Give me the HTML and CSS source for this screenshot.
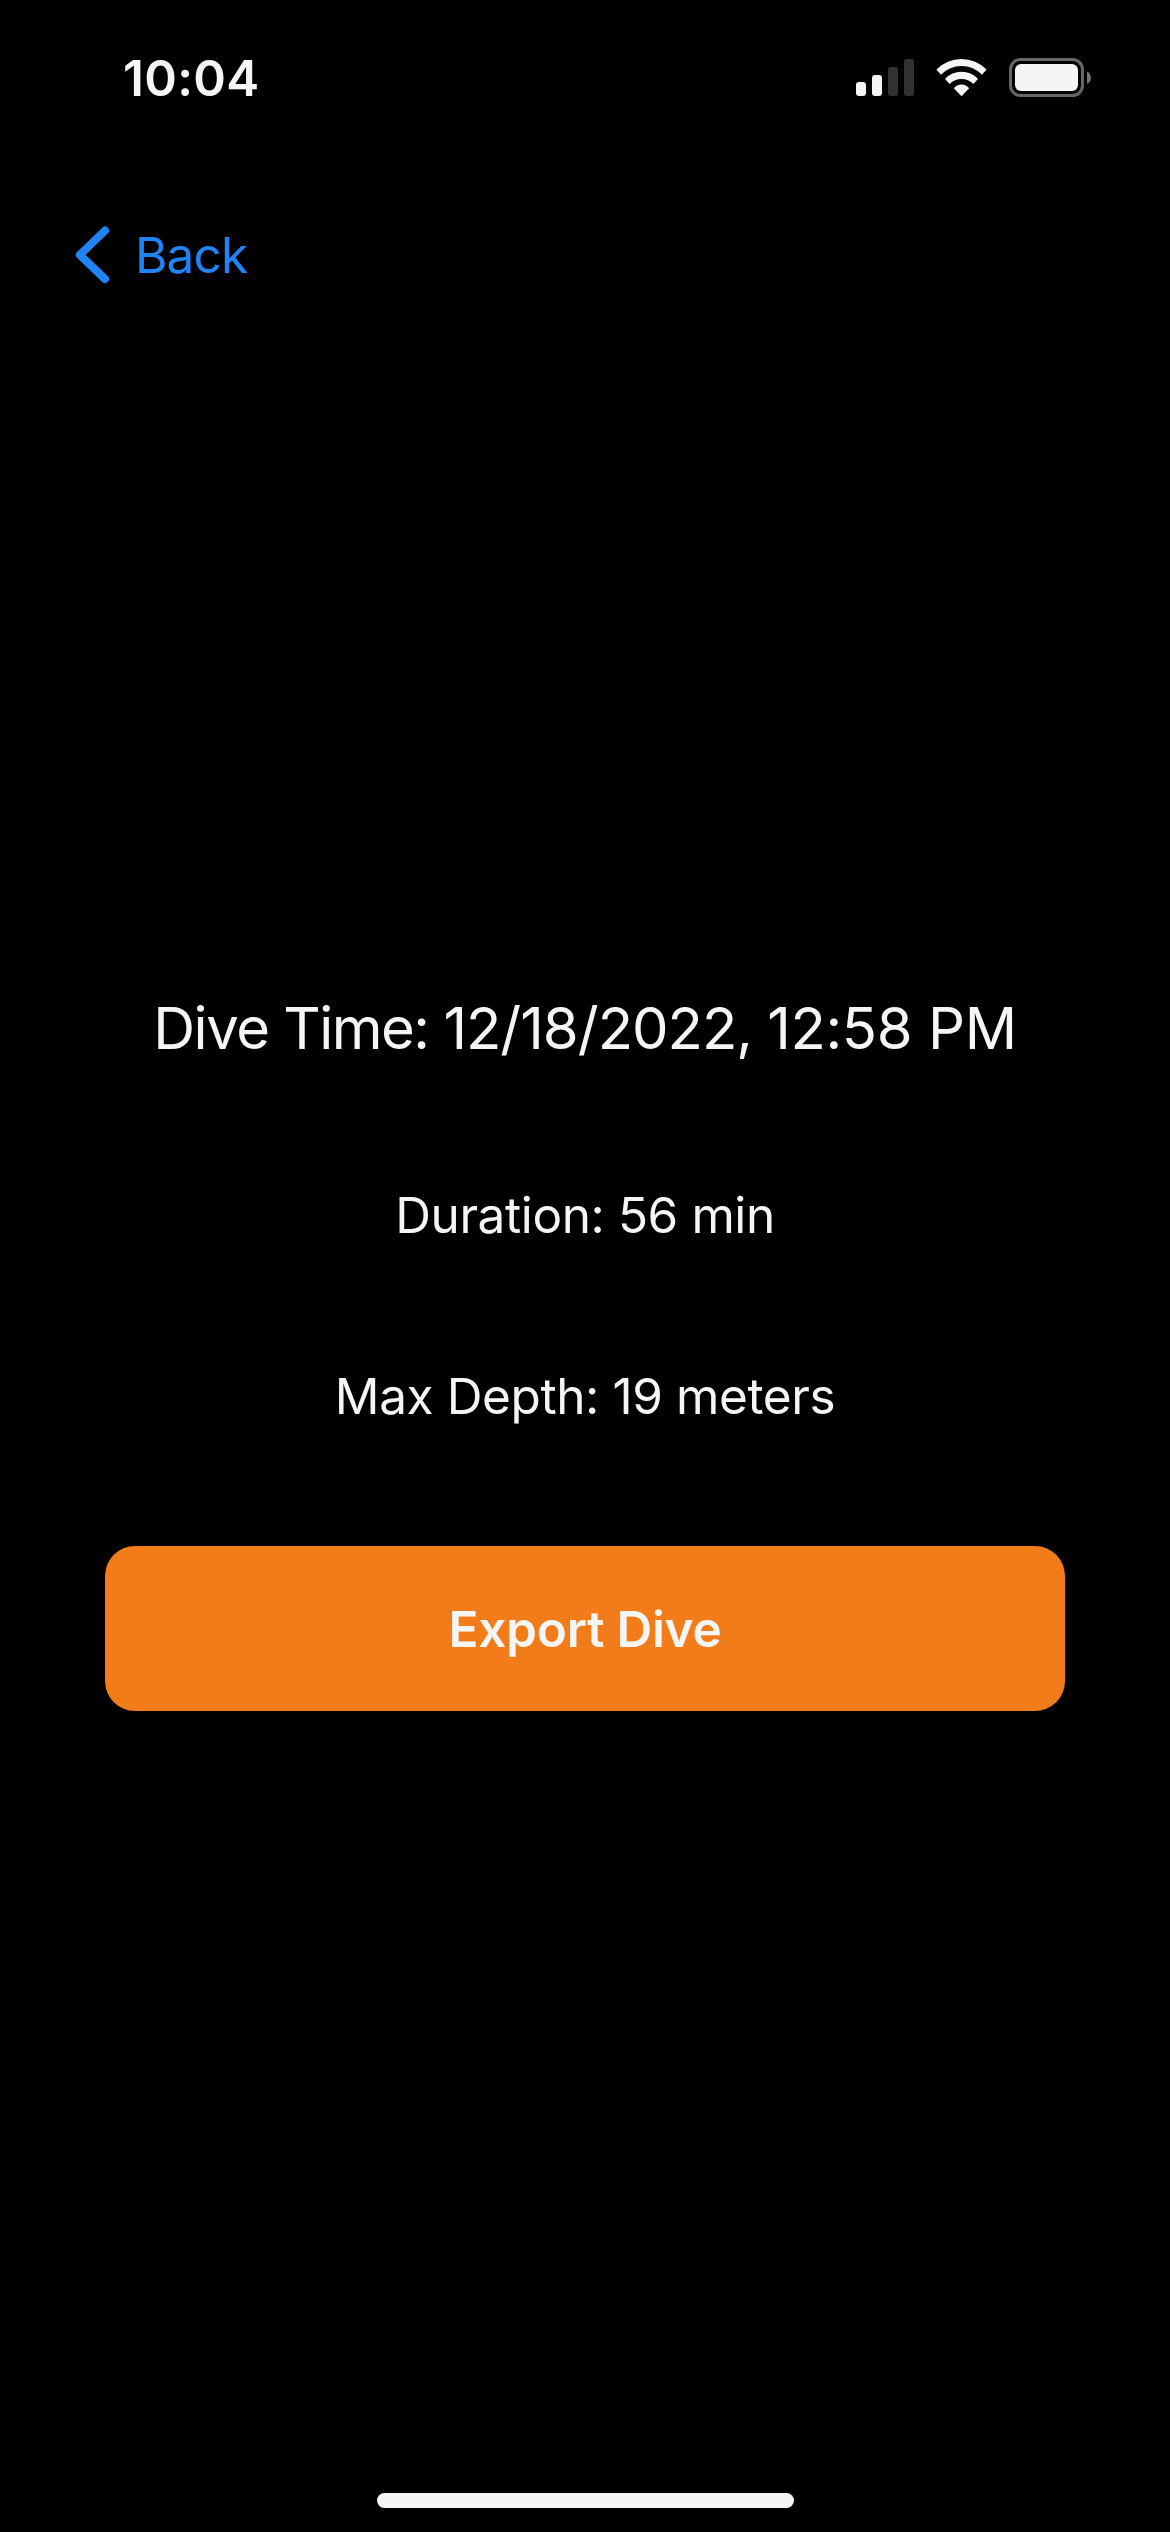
FILE: index.html
```html
<!DOCTYPE html>
<html lang="en">
<head>
<meta charset="utf-8">
<title>Dive Details</title>
<link rel="stylesheet" href="styles.css">
</head>
<body>
<div class="screen">
  <header class="status-bar">
    <span class="clock">10:04</span>
    <svg class="status-icons" width="236" height="42" viewBox="856 57 236 42" aria-hidden="true">
      <g fill="#f5f5f5">
        <rect x="856" y="82" width="10" height="14" rx="3"/>
        <rect x="872" y="75" width="10" height="21" rx="3"/>
        <path d="M936.4 69.6A35 35 0 0 1 986.6 69.6L982 74.8A28.5 28.5 0 0 0 941 74.8Z"/>
        <path d="M945 79A22.3 22.3 0 0 1 978 79L973.3 84A16.4 16.4 0 0 0 949.7 84Z"/>
        <path d="M953.8 88.2A10 10 0 0 1 969.2 88.2L961.5 96.2Z"/>
        <rect x="1015" y="64" width="63" height="27" rx="6"/>
      </g>
      <g fill="#313131">
        <rect x="888" y="67" width="10" height="29" rx="3"/>
        <rect x="904" y="59" width="10" height="37" rx="3"/>
      </g>
      <rect x="1010.5" y="59.5" width="72" height="36" rx="10" fill="none" stroke="#666" stroke-width="3"/>
      <path d="M1087 71.5A7 7 0 0 1 1087 84Z" fill="#757575"/>
    </svg>
  </header>
  <nav class="nav-bar">
    <a class="back">
      <svg class="chevron" width="36" height="60" viewBox="75 225 36 60" aria-hidden="true">
        <path d="M105 230.6L79.8 254.8L105 279" fill="none" stroke="#1f84f5" stroke-width="8" stroke-linecap="round" stroke-linejoin="round"/>
      </svg>
      <span class="back-label">Back</span>
    </a>
  </nav>
  <main class="details">
    <h1 class="title"><span class="title-label">Dive Time: </span>12/18/2022, <span class="title-time">12:58 PM</span></h1>
    <p class="stat">Duration: 56 min</p>
    <p class="stat">Max Depth: 19 meters</p>
    <button class="export">Export Dive</button>
  </main>
  <div class="home-indicator"></div>
</div>
</body>
</html>
```
FILE: styles.css
```css
* { box-sizing: border-box; }
body {
  margin: 0;
  background: #000;
  color: #f5f5f5;
  font-family: Inter, "Liberation Sans", sans-serif;
}
.screen {
  display: flex;
  flex-direction: column;
  width: 1170px;
  height: 2532px;
  overflow: hidden;
}
.status-bar {
  display: flex;
  justify-content: space-between;
  align-items: center;
  height: 156px;
  padding: 0 78px 0 123px;
}
.clock {
  font-size: 49.5px;
  line-height: 60px;
  font-weight: 600;
  letter-spacing: 0.3px;
}
.nav-bar {
  height: 129px;
  padding: 69px 0 0 75px;
}
.back {
  display: flex;
  align-items: center;
  gap: 24px;
  height: 60px;
  color: #1f84f5;
  font-size: 49.5px;
}
.back-label { letter-spacing: -0.8px; }
.details {
  display: flex;
  flex-direction: column;
  align-items: center;
  flex: 1;
  padding: 707px 105px 0;
}
.title {
  margin: 0;
  font-size: 58px;
  line-height: 72px;
  font-weight: 400;
  letter-spacing: -1px;
  white-space: nowrap;
}
.title-label { letter-spacing: -1.5px; }
.title-time { letter-spacing: -0.4px; }
.stat {
  margin: 121px 0 0;
  font-size: 49.5px;
  line-height: 60px;
  letter-spacing: -0.4px;
}
.export {
  width: 100%;
  height: 165px;
  margin-top: 120px;
  padding: 0;
  border: 0;
  border-radius: 30px;
  background: #f37c1a;
  color: #f5f5f5;
  font: 600 49.5px/60px Inter, "Liberation Sans", sans-serif;
  letter-spacing: -0.25px;
}
.home-indicator {
  align-self: center;
  width: 417px;
  height: 15px;
  margin-bottom: 24px;
  border-radius: 7.5px;
  background: #f5f5f5;
}
```
